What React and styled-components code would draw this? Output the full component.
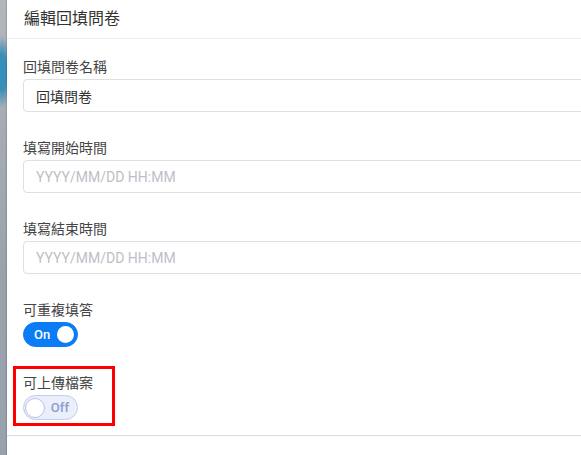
import React from "react";
import styled, { createGlobalStyle } from "styled-components";

const Global = createGlobalStyle`
  html, body { margin: 0; padding: 0; }
  body {
    width: 581px;
    height: 455px;
    overflow: hidden;
    font-family: Roboto, "Noto Sans CJK TC", sans-serif;
    background:
      radial-gradient(ellipse 10px 36px at 2px 72px, #2f8fbd 0%, #3a8fb8 50%, rgba(58,143,184,0) 100%),
      linear-gradient(180deg, #b3b7bd 0%, #a4abb3 30%, #9aa3ad 60%, #98a2ad 100%);
  }
`;

const Page = styled.div`
  display: flex;
  padding-left: 7px;
  height: 455px;
`;

const Modal = styled.div`
  width: 800px;
  flex-shrink: 0;
  background: #fff;
  display: flex;
  flex-direction: column;
  box-shadow: -1px 0 1px rgba(0, 0, 0, 0.12);
`;

const Header = styled.div`
  height: 38px;
  display: flex;
  align-items: center;
  padding: 0 17px;
  border-bottom: 1px solid #ececec;
`;

const Title = styled.h5`
  margin: 0;
  font-family: Roboto, "Noto Sans CJK TC", sans-serif;
  font-size: 16px;
  font-weight: 400;
  color: #333;
  line-height: 20px;
`;

const Body = styled.div`
  padding: 18px 16px 15px;
  display: flex;
  flex-direction: column;
  gap: 26px;
  border-bottom: 1px solid #dcdcdc;
`;

const Field = styled.div`
  position: relative;
  display: flex;
  flex-direction: column;
  align-items: flex-start;
  gap: 2px;

  ${(p) =>
    p.$highlight &&
    `
    &::after {
      content: "";
      position: absolute;
      left: -10px;
      top: -7px;
      width: 96px;
      height: 54px;
      border: 3px solid #ff0000;
      pointer-events: none;
    }
  `}
`;

const Label = styled.label`
  font-size: 14px;
  line-height: 20px;
  color: #454545;
  font-family: Roboto, "Noto Sans CJK TC", sans-serif;
`;

const Input = styled.input`
  box-sizing: border-box;
  width: 100%;
  height: 33px;
  border: 1px solid #dedfe2;
  border-radius: 4px;
  padding: 0 12px;
  font-size: 14px;
  font-family: Roboto, "Noto Sans CJK TC", sans-serif;
  color: #333;
  outline: none;
  background: #fff;

  &::placeholder {
    color: #bcc0c6;
  }
`;

const Switch = styled.button`
  box-sizing: border-box;
  width: 55px;
  height: 25px;
  border-radius: 13px;
  display: flex;
  align-items: center;
  cursor: pointer;
  font-family: Roboto, sans-serif;
  font-size: 13px;
  font-weight: 500;
  border: 1px solid ${(p) => (p.$on ? "#0a7cf6" : "#c4cdec")};
  background: ${(p) => (p.$on ? "#0a7cf6" : "#ebeffb")};
  color: ${(p) => (p.$on ? "#fff" : "#8e9ccf")};
  flex-direction: ${(p) => (p.$on ? "row" : "row-reverse")};
  justify-content: space-between;
  padding: ${(p) => (p.$on ? "0 3px 0 10px" : "0 8px 0 0")};
`;

const Knob = styled.span`
  box-sizing: border-box;
  width: ${(p) => (p.$on ? "17px" : "20px")};
  height: ${(p) => (p.$on ? "17px" : "20px")};
  border-radius: 50%;
  background: #fff;
  border: ${(p) => (p.$on ? "none" : "1px solid #b9c4ea")};
  margin-left: ${(p) => (p.$on ? "0" : "1px")};
`;

const SwitchText = styled.span`
  line-height: 1;
`;

function Toggle({ on }) {
  return (
    <Switch type="button" $on={on}>
      <SwitchText>{on ? "On" : "Off"}</SwitchText>
      <Knob $on={on} />
    </Switch>
  );
}

export default function App() {
  return (
    <>
      <Global />
      <Page>
        <Modal>
          <Header>
            <Title>編輯回填問卷</Title>
          </Header>
          <Body>
            <Field>
              <Label>回填問卷名稱</Label>
              <Input defaultValue="回填問卷" />
            </Field>
            <Field>
              <Label>填寫開始時間</Label>
              <Input placeholder="YYYY/MM/DD HH:MM" />
            </Field>
            <Field>
              <Label>填寫結束時間</Label>
              <Input placeholder="YYYY/MM/DD HH:MM" />
            </Field>
            <Field>
              <Label>可重複填答</Label>
              <Toggle on />
            </Field>
            <Field $highlight>
              <Label>可上傳檔案</Label>
              <Toggle on={false} />
            </Field>
          </Body>
        </Modal>
      </Page>
    </>
  );
}
